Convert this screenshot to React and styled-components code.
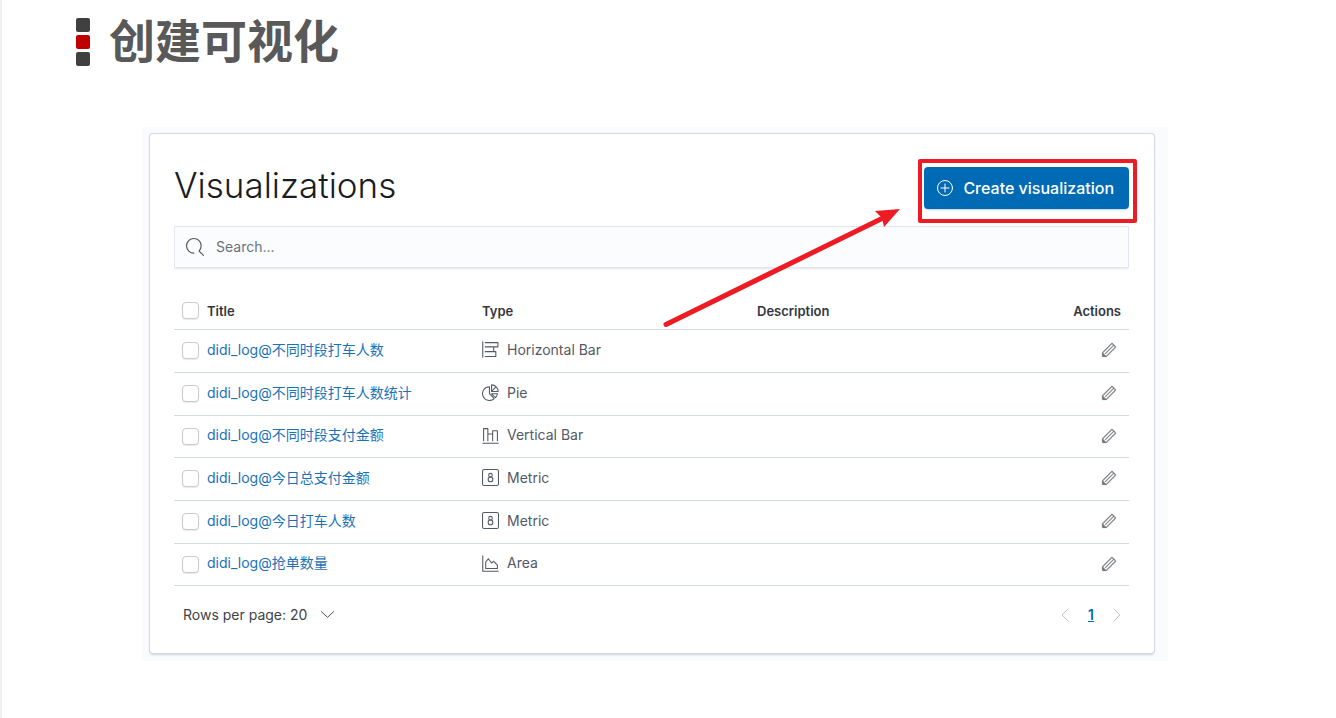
import React from "react";
import styled, { createGlobalStyle } from "styled-components";

const GlobalStyle = createGlobalStyle`
  *, *::before, *::after { box-sizing: border-box; }
  body {
    margin: 0;
    background: #fff;
    color: #404349;
    font-family: Inter, "Noto Sans CJK SC", sans-serif;
    font-size: 14px;
    line-height: 24px;
  }
  button, input, select { font: inherit; color: inherit; }
`;

const Slide = styled.main`
  min-height: 100vh;
  border-left: 2px solid #f1f1f1;
`;

const SlideHeader = styled.header`
  display: flex;
  gap: 19px;
  padding: 18px 74px 0;
  height: 127px;
`;

const Marker = styled.div`
  display: grid;
  grid-template-rows: repeat(3, 14px);
  gap: 3px;
  width: 14px;
`;

const Square = styled.span`
  border-radius: 2px;
  background: ${(p) => (p.$accent ? "#c00000" : "#404040")};
`;

const SlideTitle = styled.h1`
  margin: 0;
  font-family: "Noto Sans CJK SC", sans-serif;
  font-size: 46px;
  line-height: 40px;
  font-weight: 700;
  color: #595959;
`;

const Backdrop = styled.section`
  margin: 0 168px 0 140px;
  padding: 6px 13px 7px 7px;
  background: #fafbfd;
`;

const Card = styled.div`
  padding: 33px 25px 26px 24px;
  background: #fff;
  border: 1px solid #d3dae6;
  border-radius: 4px;
  box-shadow: 0 2px 2px -1px rgba(152, 162, 179, 0.4), 0 0 1px #d3dae6;
`;

const CardHeader = styled.div`
  display: flex;
  justify-content: space-between;
  align-items: flex-start;
  margin-bottom: 17px;
`;

const Heading = styled.h2`
  margin: 0;
  font-size: 35px;
  line-height: 36px;
  font-weight: 300;
  color: #1a1c21;
`;

const Callout = styled.div`
  position: relative;
`;

const CalloutFrame = styled.div`
  position: absolute;
  inset: -8px -8px -14px -6px;
  border: 4px solid #ed1c24;
  border-radius: 2px;
  pointer-events: none;
`;

const CalloutArrow = styled.svg`
  position: absolute;
  top: 38px;
  right: 226px;
  pointer-events: none;
`;

const PrimaryButton = styled.button`
  display: flex;
  align-items: center;
  gap: 10px;
  height: 42px;
  padding: 0 15px 0 13px;
  border: 0;
  border-radius: 4px;
  background: #006bb4;
  box-shadow: 0 2px 2px -1px rgba(54, 97, 126, 0.3);
  color: #fff;
  font-size: 16px;
  font-weight: 500;
  white-space: nowrap;
`;

const SearchBox = styled.label`
  display: flex;
  align-items: center;
  gap: 12px;
  height: 42px;
  margin-bottom: 25px;
  padding: 0 11px;
  background: #fbfcfd;
  border: 1px solid #e3e6ef;
  box-shadow: 0 2px 2px -1px rgba(152, 162, 179, 0.3);
  color: #535966;
`;

const SearchInput = styled.input`
  flex: 1;
  min-width: 0;
  padding: 0;
  border: 0;
  outline: 0;
  background: transparent;
  &::placeholder { color: #6a717d; opacity: 1; }
`;

const Table = styled.table`
  width: 100%;
  table-layout: fixed;
  border-collapse: collapse;
`;

const Row = styled.tr`
  height: 43px;
  border-bottom: 1px solid #d3dae6;
  &:nth-child(3n) { height: 42px; }
`;

const HeadRow = styled(Row)`
  height: 36px;
`;

const HeadCell = styled.th`
  padding: 0 8px;
  text-align: ${(p) => p.$align || "left"};
  font-size: 13px;
  font-weight: 600;
  color: #343741;
`;

const Cell = styled.td`
  padding: 0 8px 2px;
  text-align: ${(p) => p.$align || "left"};
`;

const CheckCell = styled.td`
  padding: 0 0 0 8px;
`;

const Col = styled.col`
  width: ${(p) => p.$width || "auto"};
`;

const Checkbox = styled.input`
  display: block;
  appearance: none;
  width: 17px;
  height: 17px;
  margin: 0;
  background: #fff;
  border: 1px solid #c9cbcd;
  border-radius: 4px;
  box-shadow: 0 1px 1px rgba(152, 162, 179, 0.25);
  &:checked { background: #006bb4; border-color: #006bb4; }
`;

const Link = styled.a`
  color: #1a72b8;
  text-decoration: none;
  white-space: nowrap;
`;

const TypeLabel = styled.span`
  display: flex;
  align-items: center;
  gap: 8px;
  color: #535966;
`;

const IconButton = styled.button`
  display: inline-flex;
  align-items: center;
  justify-content: center;
  padding: 4px;
  border: 0;
  background: none;
  vertical-align: middle;
  color: ${(p) => (p.$muted ? "#c2c3c6" : "#7b7d82")};
`;

const Footer = styled.div`
  display: flex;
  justify-content: space-between;
  align-items: center;
  height: 24px;
  margin-top: 17px;
  padding: 0 0 0 9px;
`;

const PageSize = styled.label`
  display: flex;
  align-items: center;
  gap: 12px;
`;

const PageSizeSelect = styled.select`
  appearance: none;
  padding: 0;
  border: 0;
  background: none;
`;

const Pager = styled.nav`
  display: flex;
  align-items: center;
  gap: 11px;
`;

const CurrentPage = styled.a`
  color: #006bb4;
  font-weight: 600;
  text-decoration: underline;
`;

const Icon = ({ size = 16, children }) => (
  <svg width={size} height={size} viewBox="0 0 16 16" fill="none" stroke="currentColor" strokeLinejoin="round" strokeLinecap="round" aria-hidden="true">
    {children}
  </svg>
);

const typeIcons = {
  "Horizontal Bar": <path d="M.7.800v14.400M3 1.500h12v4H3M11 5.500V10M3 10h10v4.500H3" />,
  Pie: (
    <>
      <path d="M7 2.500a6.500 6.500 0 1 0 4.500 11.200L7 9z" />
      <path d="M9 .8v6.200h6.200A6.200 6.200 0 0 0 9 .8zM9 7l4-4.200M9 9.200h5.500a6 6 0 0 1-1.800 3.600z" />
    </>
  ),
  "Vertical Bar": <path d="M.8 15.300h14.400M1.500 13V1.500h4V13M5.500 6.500H10M10 13V3.500h4.500V13" />,
  Metric: (
    <>
      <rect x=".5" y=".5" width="15" height="15" rx="1.500" />
      <circle cx="8" cy="5.800" r="1.700" />
      <circle cx="8" cy="9.800" r="2.200" />
    </>
  ),
  Area: <path d="M.7.800v14.500h14.500M3.500 12.700V6.500L6 3.500l3 4 2-1.500 3.500 3.500v3.200z" />,
};

const Pencil = () => (
  <Icon>
    <path fill="currentColor" stroke="currentColor" strokeWidth=".2" d="M12.148 3.148L11 2l-9 9v3h3l9-9-1.144-1.144-8.002 7.998a.502.502 0 01-.708 0 .502.502 0 010-.708l8.002-7.998zM11 1c.256 0 .512.098.707.293l3 3a.999.999 0 010 1.414l-9 9A.997.997 0 015 15H2a1 1 0 01-1-1v-3c0-.265.105-.52.293-.707l9-9A.997.997 0 0111 1zM5 14H2v-3l3 3z" />
  </Icon>
);

const rows = [
  { title: "didi_log@不同时段打车人数", type: "Horizontal Bar" },
  { title: "didi_log@不同时段打车人数统计", type: "Pie" },
  { title: "didi_log@不同时段支付金额", type: "Vertical Bar" },
  { title: "didi_log@今日总支付金额", type: "Metric" },
  { title: "didi_log@今日打车人数", type: "Metric" },
  { title: "didi_log@抢单数量", type: "Area" },
];

export default function App() {
  return (
    <>
      <GlobalStyle />
      <Slide>
        <SlideHeader>
          <Marker>
            <Square />
            <Square $accent />
            <Square />
          </Marker>
          <SlideTitle>创建可视化</SlideTitle>
        </SlideHeader>
        <Backdrop>
          <Card>
            <CardHeader>
              <Heading>Visualizations</Heading>
              <Callout>
                <PrimaryButton type="button">
                  <Icon>
                    <circle cx="8" cy="8" r="7.500" />
                    <path d="M8 4v8M4 8h8" />
                  </Icon>
                  Create visualization
                </PrimaryButton>
                <CalloutFrame />
                <CalloutArrow width="242" height="124" viewBox="0 0 242 124" aria-hidden="true">
                  <path d="M5 119.500L222 13" stroke="#ed1c24" strokeWidth="5" strokeLinecap="round" />
                  <path d="M239 4L214 6l7 7 2 9z" fill="#ed1c24" />
                </CalloutArrow>
              </Callout>
            </CardHeader>
            <SearchBox>
              <Icon size={18}>
                <path fill="currentColor" stroke="none" d="M11.271 11.978l3.872 3.873a.502.502 0 00.708 0 .502.502 0 000-.708l-3.565-3.564c2.380-2.747 2.267-6.923-.342-9.532-2.730-2.730-7.170-2.730-9.898 0-2.728 2.729-2.728 7.170 0 9.900a6.955 6.955 0 004.949 2.050.5.5 0 000-1 5.960 5.960 0 01-4.242-1.757 6.010 6.010 0 010-8.486 6.004 6.004 0 018.484 0 6.010 6.010 0 010 8.486.5.5 0 00-.034.738z" />
              </Icon>
              <SearchInput type="text" placeholder="Search..." aria-label="Search visualizations" />
            </SearchBox>
            <Table>
              <colgroup>
                <Col $width="25px" />
                <Col />
                <Col />
                <Col />
                <Col $width="105px" />
              </colgroup>
              <thead>
                <HeadRow>
                  <CheckCell>
                    <Checkbox type="checkbox" aria-label="Select all rows" />
                  </CheckCell>
                  <HeadCell scope="col">Title</HeadCell>
                  <HeadCell scope="col">Type</HeadCell>
                  <HeadCell scope="col">Description</HeadCell>
                  <HeadCell scope="col" $align="right">Actions</HeadCell>
                </HeadRow>
              </thead>
              <tbody>
                {rows.map((row) => (
                  <Row key={row.title}>
                    <CheckCell>
                      <Checkbox type="checkbox" aria-label={`Select ${row.title}`} />
                    </CheckCell>
                    <Cell>
                      <Link href="#">{row.title}</Link>
                    </Cell>
                    <Cell>
                      <TypeLabel>
                        <Icon size={17}>{typeIcons[row.type]}</Icon>
                        {row.type}
                      </TypeLabel>
                    </Cell>
                    <Cell />
                    <Cell $align="right">
                      <IconButton type="button" aria-label={`Edit ${row.title}`}>
                        <Pencil />
                      </IconButton>
                    </Cell>
                  </Row>
                ))}
              </tbody>
            </Table>
            <Footer>
              <PageSize>
                <PageSizeSelect aria-label="Rows per page">
                  <option>Rows per page: 20</option>
                </PageSizeSelect>
                <Icon size={15}>
                  <path d="M1.500 5L8 11l6.500-6" />
                </Icon>
              </PageSize>
              <Pager aria-label="Pagination">
                <IconButton type="button" $muted aria-label="Previous page">
                  <Icon>
                    <path d="M11 2L5 8l6 6" />
                  </Icon>
                </IconButton>
                <CurrentPage href="#" aria-current="page">1</CurrentPage>
                <IconButton type="button" $muted aria-label="Next page">
                  <Icon>
                    <path d="M5 2l6 6-6 6" />
                  </Icon>
                </IconButton>
              </Pager>
            </Footer>
          </Card>
        </Backdrop>
      </Slide>
    </>
  );
}
